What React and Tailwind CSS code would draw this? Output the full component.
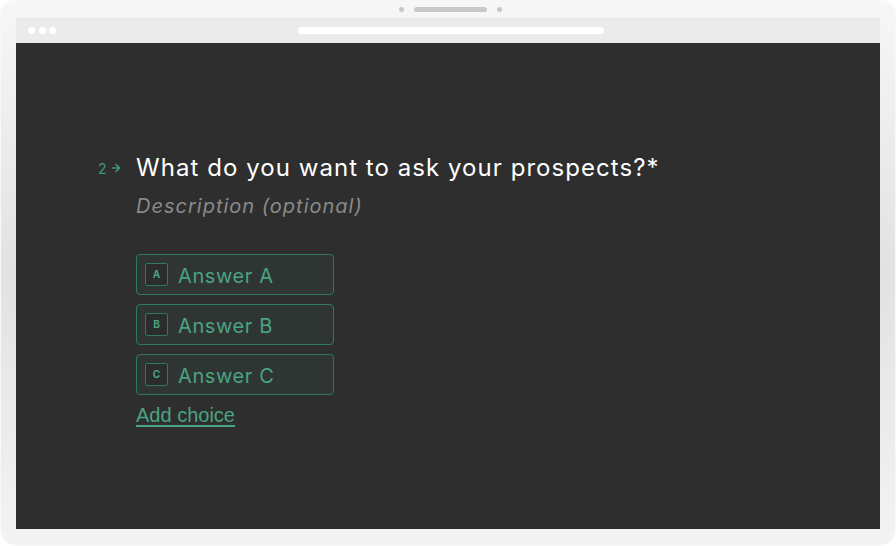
import { ArrowRight } from 'lucide-react'

const choices = [
  { key: 'A', label: 'Answer A' },
  { key: 'B', label: 'Answer B' },
  { key: 'C', label: 'Answer C' },
]

function Choice({ letter, label }) {
  return (
    <div className="flex items-center w-[198px] h-[41px] rounded-[4px] border border-[#2f7a5e] bg-[#2f3532] pl-[8px] gap-[10px]">
      <div className="flex items-center justify-center w-[23px] h-[23px] rounded-[2px] border border-[#2f7a5e] bg-[#2a2d2b] text-[10px] font-bold text-[#4aa383]">
        {letter}
      </div>
      <span className="pt-[3px] text-[20px] text-[#4aa383] tracking-[0.6px]">{label}</span>
    </div>
  )
}

export default function App() {
  return (
    <div className="w-[896px] h-[546px] bg-white overflow-hidden font-['Inter',sans-serif]">
      <div className="ml-[1px] w-[894px] h-[545px] rounded-[16px] bg-gradient-to-b from-[#f7f7f7] via-[#e2e2e2] to-[#f3f3f3] shadow-[0_0_3px_rgba(0,0,0,0.08)]">
        {/* camera */}
        <div className="h-[18px] flex items-center justify-center gap-[10px] pl-[4px]">
          <div className="w-[5px] h-[5px] rounded-full bg-[#c8c8c8]" />
          <div className="w-[73px] h-[5px] rounded-full bg-[#c8c8c8]" />
          <div className="w-[5px] h-[5px] rounded-full bg-[#c8c8c8]" />
        </div>

        <div className="ml-[15px] w-[864px]">
          {/* browser bar */}
          <div className="relative h-[25px] bg-[#ebebeb] flex items-center pl-[12px] gap-[3.5px]">
            <div className="w-[7px] h-[7px] rounded-full bg-white" />
            <div className="w-[7px] h-[7px] rounded-full bg-white" />
            <div className="w-[7px] h-[7px] rounded-full bg-white" />
            <div className="absolute left-[282px] top-[9px] w-[306px] h-[7px] rounded-full bg-white" />
          </div>

          {/* screen */}
          <div className="h-[486px] bg-[#2e2e2e] pt-[108px] pl-[82px]">
            <div className="flex">
              <div className="w-[38px] h-[34px] flex items-center gap-[3px] text-[#3f9a77]">
                <span className="text-[14px]">2</span>
                <ArrowRight size={12} strokeWidth={3} />
              </div>
              <div className="flex flex-col">
                <h1 className="text-[24px] leading-[34px] text-white tracking-[1.05px]">
                  What do you want to ask your prospects?*
                </h1>
                <p className="mt-[7px] text-[20px] leading-[28px] italic text-[#8a8a8a] tracking-[1px]">
                  Description (optional)
                </p>
                <div className="mt-[34px] flex flex-col gap-[9px]">
                  {choices.map((c) => (
                    <Choice key={c.key} letter={c.key} label={c.label} />
                  ))}
                </div>
                <a
                  href="#"
                  className="mt-[6px] text-[20px] leading-[28px] text-[#4aa383] underline underline-offset-[3px] font-['Liberation_Sans',sans-serif] w-max"
                >
                  Add choice
                </a>
              </div>
            </div>
          </div>
        </div>
      </div>
    </div>
  )
}
